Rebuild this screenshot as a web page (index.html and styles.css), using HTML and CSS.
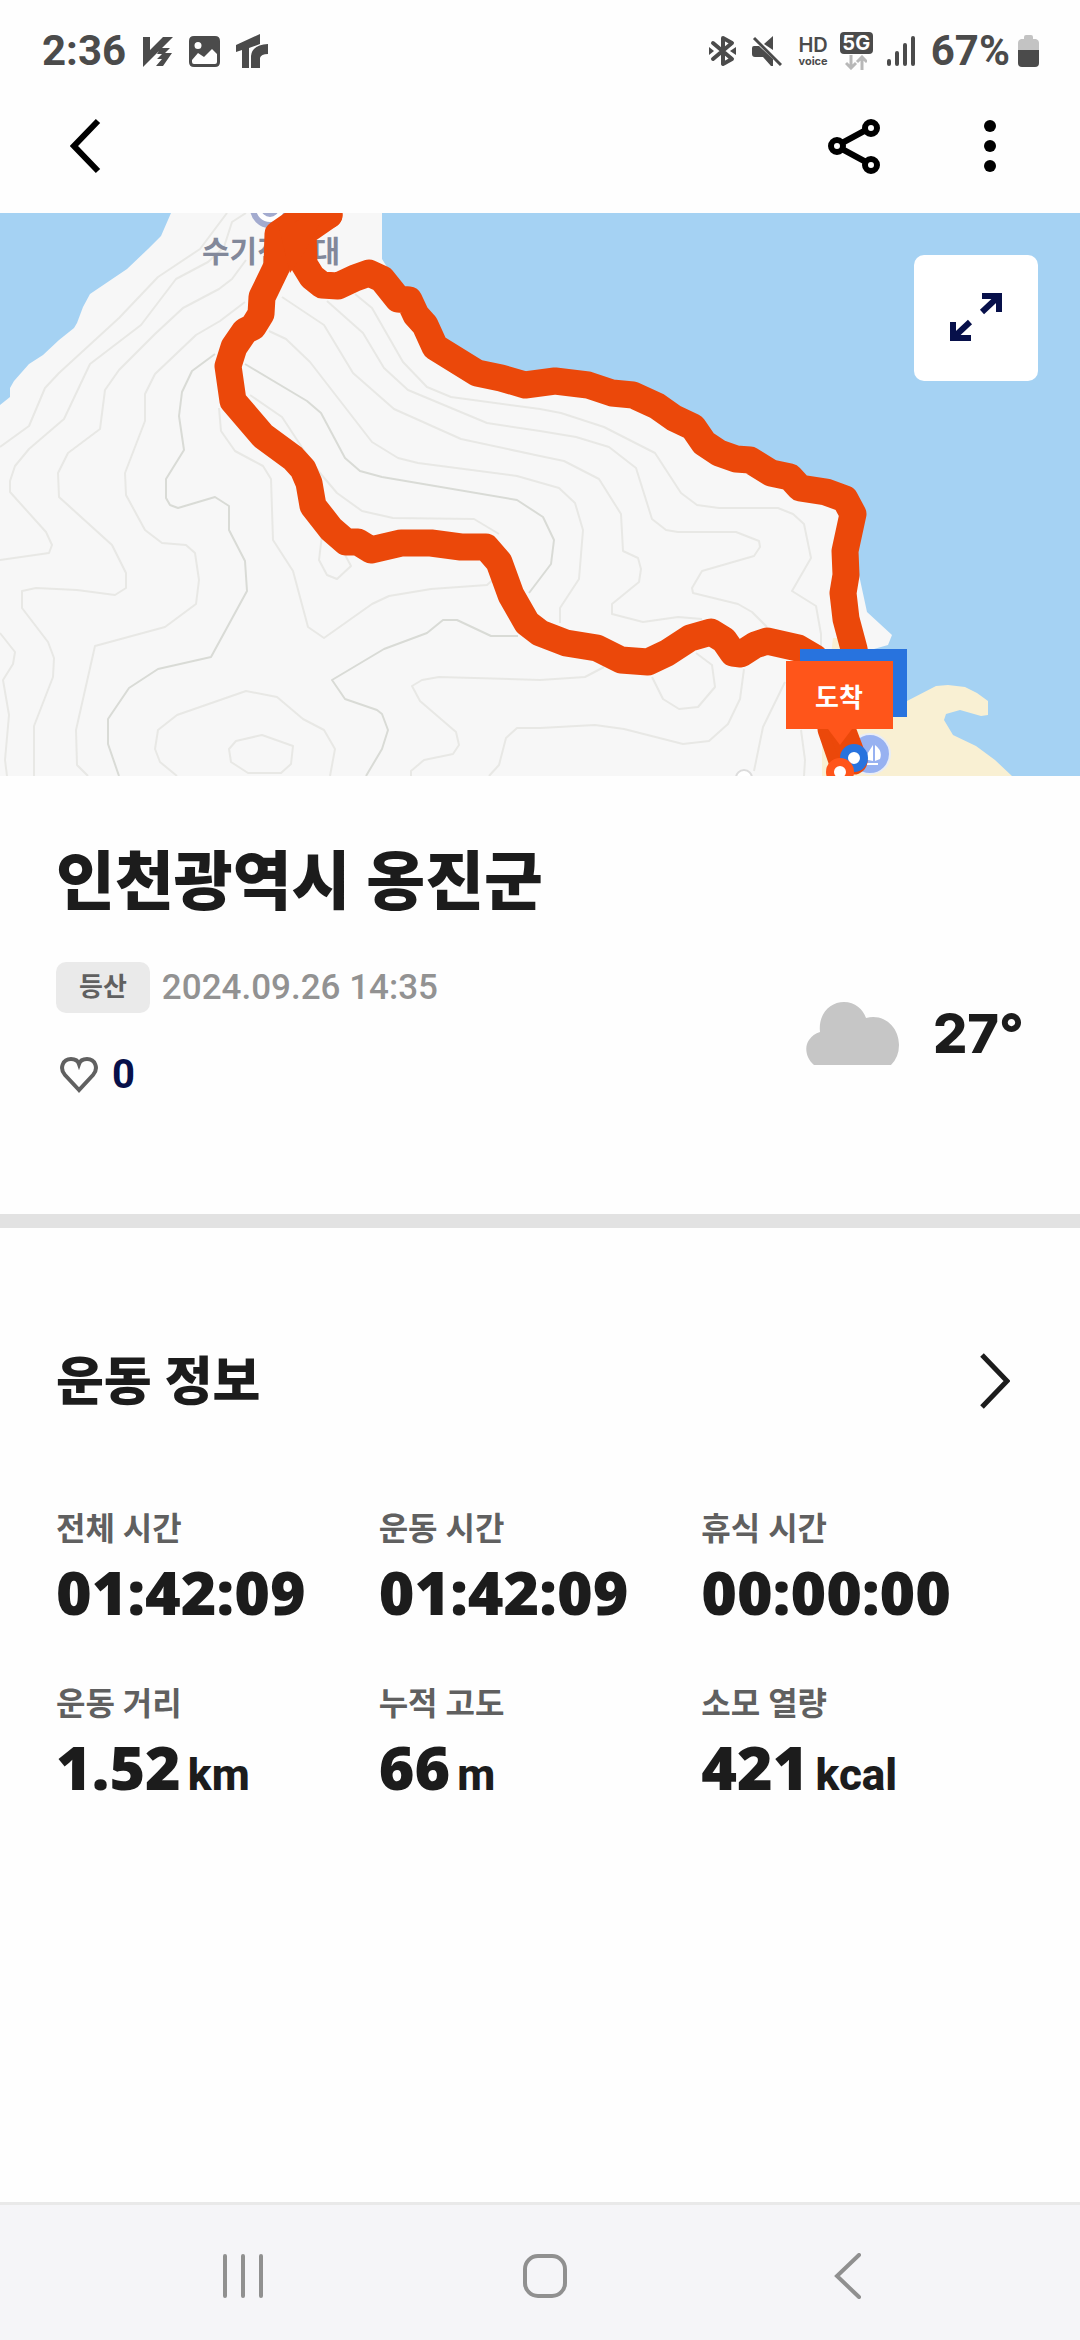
FILE: index.html
```html
<!DOCTYPE html>
<html lang="ko">
<head>
  <meta charset="UTF-8">
  <meta name="viewport" content="width=device-width, initial-scale=1.0">
  <title>인천광역시 옹진군</title>
  <link rel="stylesheet" href="styles.css">
</head>
<body>
  <div class="status-bar">
    <div class="status-left">
      <span class="status-text">2:36</span>
      <svg width="30" height="31" viewBox="0 0 30 31"><path d="M0 1H7V14L20 1H30L19 12H27L22 17H29L20 30H13L19 23H14L19 18H14L16 15L0 31Z"/></svg>
      <svg width="31" height="31" viewBox="0 0 31 31"><path fill-rule="evenodd" d="M5 0H26Q31 0 31 5V26Q31 31 26 31H5Q0 31 0 26V5Q0 0 5 0ZM9 6A3.500 3.500 0 1 0 9 13A3.500 3.500 0 1 0 9 6ZM3 24V26Q3 28 5 28H26Q28 28 28 26V18L23 13L15 21L9 17Z"/></svg>
      <svg width="32" height="34" viewBox="0 0 32 34"><path d="M0 11L24 0V10L13 14V34H6V16L0 18ZM15 34V22Q16 11 32 10V20Q25 20 24 24V34Z"/></svg>
    </div>
    <div class="status-right">
      <svg class="icon-bt" width="27" height="32" viewBox="0 0 27 32"><path fill="none" stroke="#4b4b4b" stroke-width="4" stroke-linejoin="round" stroke-linecap="round" d="M4 8L23 24L14 29V3L23 8L4 24"/><path d="M0 12L5 16L0 20ZM27 12L21 16L27 20Z"/></svg>
      <svg class="icon-mute" width="30" height="30" viewBox="0 0 30 30"><path d="M21 0V14L12 8ZM2 10H7L21 23V30H19L11 21H3Q0 21 0 18V12Q0 10 2 10Z"/><path fill="none" stroke="#4b4b4b" stroke-width="3" d="M2 2L29 29"/></svg>
      <div class="hd-voice"><b>HD</b><span>voice</span></div>
      <div class="network">
        <b>5G</b>
        <svg width="22" height="15" viewBox="0 0 22 15"><path fill="none" stroke="#b8b8b8" stroke-width="3" d="M6 0V13M1 8L6 13L11 8M17 15V2M12 7L17 2L22 7"/></svg>
      </div>
      <svg class="icon-signal" width="28" height="30" viewBox="0 0 28 30"><path fill="none" stroke="#4b4b4b" stroke-width="4" stroke-linecap="round" d="M2 25V28M10 17V28M18 9V28M26 2V28"/></svg>
      <span class="status-text">67%</span>
      <svg class="icon-battery" width="21" height="32" viewBox="0 0 21 32"><path fill="#c3c3c3" d="M6 2Q6 0 8 0H13Q15 0 15 2V4H18Q21 5 21 8V16H0V8Q0 5 3 4H6Z"/><path d="M0 15H21V28Q21 32 17 32H4Q0 32 0 28Z"/></svg>
    </div>
  </div>

  <header class="top-bar">
    <button class="icon-button back" aria-label="뒤로">
      <svg width="32" height="56" viewBox="0 0 32 56"><path fill="none" stroke="#000" stroke-width="6" d="M28 3L4 28L28 53"/></svg>
    </button>
    <div class="top-actions">
      <button class="icon-button" aria-label="공유">
        <svg width="52" height="56" viewBox="0 0 52 56"><g fill="none" stroke="#000" stroke-width="6"><path d="M14 25L38 12M14 31L38 44"/><circle cx="9" cy="28" r="6"/><circle cx="43" cy="10" r="6"/><circle cx="43" cy="47" r="6"/></g></svg>
      </button>
      <button class="icon-button" aria-label="더보기">
        <svg width="12" height="52" viewBox="0 0 12 52"><circle cx="6" cy="6" r="6"/><circle cx="6" cy="26" r="6"/><circle cx="6" cy="46" r="6"/></svg>
      </button>
    </div>
  </header>

  <main>
    <div class="map">
      <svg class="map-canvas" viewBox="0 0 1080 563">
        <rect width="1080" height="563" fill="#a5d2f3"/>
        <!-- land and beach -->
        <path fill="#f7f7f7" d="M171 0L161 23L148 36L127 56L90 81L83 94L77 110L74 115L59 127L43 142L29 151L14 168L10 175V184L0 192V563H860V440L888 432L892 422L867 399L859 362L850 290L800 270L700 225L610 180L525 170L435 130L382 46V0Z"/>
        <path fill="#f9f0d3" d="M833 425L846 425V480L907 488L936 473L948 472L965 474L977 480L988 488V502L981 503L960 497L946 501L944 507L953 522L976 533L995 547L1012 563H822V520Z"/>
        <!-- contours -->
        <g class="contour">
          <path d="M227 0L200 36L158 64L119 105L59 160L45 175L29 213L0 234"/>
          <path d="M246 0L232 9L224 34L208 49L176 66L141 112L90 151L64 206L29 236L15 253L10 268V279L46 319L52 332L49 340L0 347"/>
          <path d="M246 47L232 66L219 76L183 95L155 121L119 157L105 177L100 216L68 240L58 260L59 284L112 332L126 360V375L115 382L77 377L36 375L22 378V395L48 429L54 445L53 464L34 513V563"/>
          <path d="M245 89L220 108L196 122L155 161L145 181V208L125 260L126 282L145 317L162 330L186 332L195 340L199 367L196 391L165 414L95 433L76 517L77 552L88 563"/>
          <path d="M219 195L221 218L235 238L263 253L271 266L273 327L293 358L308 414L324 425L372 391L389 383L431 376L487 372L496 364"/>
          <path d="M177 563L160 549L155 536L158 517L177 502L246 478L277 484L303 506L324 517L335 536L330 563"/>
          <path d="M262 522L293 533L291 551L281 560H248L231 549L229 536L236 528Z"/>
          <path d="M0 420L15 439L13 451L3 467L9 502L5 547L7 563"/>
          <path d="M322 322L319 347L327 362L337 366L351 353L344 340"/>
          <path d="M282 84L324 112L353 160L394 196L461 226L540 243L564 248L599 266L621 301L623 338L638 345L641 356L639 369L612 391V401L643 409L678 404L702 406"/>
          <path d="M327 88L363 120L384 155L408 177L487 210L540 218L576 224L609 234L636 255L652 306L666 317L678 319H736L759 328L760 334L754 343L702 358L692 375L693 380L738 391L752 399L767 414"/>
          <path d="M355 81L372 95L403 149L427 174L451 184L540 196L561 200L604 214L655 240L681 280L697 292L719 295H778L793 301L804 311L811 345L792 378L816 393L821 421V445"/>
          <path d="M269 118L286 126L310 149L372 229L398 245L418 250L517 263L559 275L575 290L583 317L579 366L560 395V410"/>
          <path d="M250 182L282 204L303 236L320 260L337 280L362 298L393 305L474 306L499 321"/>
          <path d="M604 454L585 464L540 467L439 464L422 467L412 473L420 488L456 519L459 532L453 541L424 547L411 558V563"/>
          <path d="M489 563L499 552L506 525L517 515H540L595 512L624 516L683 531L709 528L728 511L740 486L744 456"/>
          <path d="M652 464L663 486L679 496L698 494L715 474L712 452L696 440"/>
          <path d="M785 469L763 514L754 558M801 517L805 547L804 563"/>
        </g>
        <g class="contour major">
          <path d="M215 141L192 158L182 179L179 203L184 237L166 266V285L170 292L178 295L215 284L229 293V317L245 348L247 378L211 444L158 456L129 475L108 506V531L119 563"/>
          <path d="M518 423H491L457 407H443L427 420L384 436L332 467L345 486L377 497L382 501L388 517L382 536L366 563"/>
          <path d="M245 151L307 188L321 200L345 245L360 258L382 264L517 287L543 304L554 327L551 351L529 380"/>
        </g>
        <circle cx="744" cy="565" r="8" fill="#fff" stroke="#dcdcdc" stroke-width="2"/>
        <!-- viewpoint -->
        <circle cx="270" cy="-5" r="17" fill="#fff" stroke="#a3abcf" stroke-width="6"/>
        <circle cx="270" cy="-5" r="9" fill="#a3abcf"/>
        <text class="place-name" x="271" y="49">수기전망대</text>
        <!-- marina -->
        <circle cx="870" cy="541" r="20" fill="#97b1f1" stroke="#e9edf5" stroke-width="2"/>
        <path fill="#fff" d="M873 532V548L864 546ZM875 532Q883 538 880 546L875 548ZM866 550H878V552H866Z"/>
        <!-- route -->
        <path class="route" d="M329 2L291 12L278 21L277 53L262 84L261 101L253 114L245 118L234 134L228 153L233 188L263 223L293 245L303 256L309 270L313 293L331 316L346 329L358 329L371 337L401 330H431L461 334H486L499 349L511 382L527 410L540 420L566 430L597 435L621 447L648 449L667 440L690 425L711 419L724 427L733 440L741 441L755 432L767 428L798 435L815 445L829 469L831 516L842 548"/>
        <path class="route" d="M329 2L303 20L304 51L312 64L322 72L338 73L355 65L369 60L382 66L398 86L409 87L416 102L425 112L435 134L477 160L501 165L525 172L555 168L588 172L612 180L633 182L657 193L674 205L693 214L704 230L719 240L736 246L750 247L771 260L790 264L800 275L826 279L845 286L853 301L845 338L846 362L843 380L846 406L854 436L858 458L842 516L854 548"/>
        <path fill="#eb480a" d="M278 10H320L304 40L290 60Z"/>
        <!-- start and finish markers -->
        <rect x="800" y="436" width="107" height="68" fill="#2873de"/>
        <circle cx="854" cy="545" r="10" fill="#fff" stroke="#2873de" stroke-width="8"/>
        <path fill="#ff551a" d="M786 448H893V516H852L840 532L828 516H786Z"/>
        <circle cx="840" cy="559" r="10" fill="#fff" stroke="#ff551a" stroke-width="8"/>
        <text class="marker-name" x="839" y="494">도착</text>
      </svg>
      <button class="expand" aria-label="지도 확대">
        <svg width="52" height="50" viewBox="0 0 52 50"><g fill="none" stroke="#07104a" stroke-width="6"><path d="M32 3H49V19M48 4L32 19"/><path d="M3 29V45H21M4 44L20 29"/></g></svg>
      </button>
    </div>

    <section class="summary">
      <h1>인천광역시 옹진군</h1>
      <div class="summary-row">
        <div>
          <div class="meta">
            <span class="badge">등산</span>
            <time datetime="2024-09-26T14:35">2024.09.26 14:35</time>
          </div>
          <button class="like" aria-label="좋아요">
            <svg width="38" height="36" viewBox="0 0 38 36"><path fill="none" stroke="#606060" stroke-width="4" d="M19 33L5 18C-1 11 3 2 11 2C15 2 18 4 19 7C20 4 23 2 27 2C35 2 39 11 33 18Z"/></svg>
            <span>0</span>
          </button>
        </div>
        <div class="weather">
          <svg width="93" height="64" viewBox="0 0 93 64"><path fill="#c6c6c6" d="M8 63C0 56 -2 45 3 38Q7 32 14 30C12 12 24 0 38 0C49 0 57 7 60 16C78 11 93 25 93 43Q93 55 85 63Z"/></svg>
          <span>27°</span>
        </div>
      </div>
    </section>

    <section class="workout">
      <div class="workout-head">
        <h2>운동 정보</h2>
        <button class="icon-button" aria-label="운동 정보 더보기">
          <svg width="30" height="56" viewBox="0 0 30 56"><path fill="none" stroke="#1c1c1c" stroke-width="5" d="M2 2L27 28L2 54"/></svg>
        </button>
      </div>
      <dl class="stats">
        <div><dt>전체 시간</dt><dd>01:42:09</dd></div>
        <div><dt>운동 시간</dt><dd>01:42:09</dd></div>
        <div><dt>휴식 시간</dt><dd>00:00:00</dd></div>
        <div><dt>운동 거리</dt><dd>1.52<small>km</small></dd></div>
        <div><dt>누적 고도</dt><dd>66<small>m</small></dd></div>
        <div><dt>소모 열량</dt><dd>421<small>kcal</small></dd></div>
      </dl>
    </section>
  </main>

  <nav class="nav-bar">
    <button class="icon-button" aria-label="최근 앱">
      <svg width="42" height="44" viewBox="0 0 42 44"><path d="M3 2V42M21 2V42M39 2V42"/></svg>
    </button>
    <button class="icon-button" aria-label="홈">
      <svg width="44" height="44" viewBox="0 0 44 44"><rect x="2" y="2" width="40" height="40" rx="13"/></svg>
    </button>
    <button class="icon-button" aria-label="뒤로 가기">
      <svg width="28" height="46" viewBox="0 0 28 46"><path d="M25 2L3 23L25 44"/></svg>
    </button>
  </nav>
</body>
</html>
```
FILE: styles.css
```css
* {
  box-sizing: border-box;
}
body {
  margin: 0;
  min-height: 100vh;
  display: flex;
  flex-direction: column;
  background: #fefefe;
  color: #1c1c1c;
  font-family: Roboto, "Noto Sans CJK KR", sans-serif;
}
svg {
  display: block;
  flex: none;
}
button {
  border: none;
  padding: 0;
  background: none;
  font: inherit;
  color: inherit;
  cursor: pointer;
}
h1, h2, dl, dd {
  margin: 0;
}
main {
  flex: 1;
}

/* status bar */
.status-bar {
  display: flex;
  justify-content: space-between;
  height: 78px;
  padding: 24px 41px 0 42px;
  color: #4b4b4b;
}
.status-bar svg {
  fill: #4b4b4b;
}
.status-left, .status-right {
  display: flex;
  align-items: center;
}
.status-left {
  gap: 16px;
}
.status-text {
  font-size: 42px;
  font-weight: 700;
  line-height: 54px;
}
.status-left .status-text {
  margin-right: 1px;
}
.icon-bt, .icon-mute {
  margin-right: 16px;
}
.hd-voice {
  display: flex;
  flex-direction: column;
  align-items: center;
  margin-right: 12px;
  font-family: Inter, sans-serif;
  font-size: 11px;
  font-weight: 700;
  line-height: 12px;
}
.hd-voice b {
  font-size: 20px;
  font-weight: 600;
  line-height: 20px;
}
.network {
  display: flex;
  flex-direction: column;
  align-items: center;
  gap: 1px;
  margin-right: 14px;
}
.network b {
  width: 33px;
  border-radius: 4px;
  background: #4b4b4b;
  color: #fff;
  font-family: Inter, sans-serif;
  font-size: 20px;
  line-height: 22px;
  text-align: center;
}
.icon-signal {
  margin-right: 16px;
}
.icon-battery {
  margin-left: 8px;
}

/* top bar */
.top-bar {
  display: flex;
  justify-content: space-between;
  align-items: center;
  height: 135px;
  padding: 0 84px 0 70px;
}
.top-actions {
  display: flex;
  align-items: center;
  gap: 104px;
}

/* map */
.map {
  position: relative;
}
.map-canvas {
  width: 100%;
  height: auto;
}
.contour {
  fill: none;
  stroke: #e8e8e5;
  stroke-width: 2;
  stroke-linejoin: round;
}
.contour.major {
  stroke: #d9dbd6;
}
.route {
  fill: none;
  stroke: #eb480a;
  stroke-width: 27;
  stroke-linejoin: round;
  stroke-linecap: round;
}
.place-name, .marker-name {
  font-family: "Noto Sans CJK KR", sans-serif;
  font-weight: 700;
  text-anchor: middle;
}
.place-name {
  font-size: 30px;
  fill: #82889a;
}
.marker-name {
  font-size: 26px;
  fill: #fff;
}
.expand {
  position: absolute;
  top: 42px;
  right: 42px;
  display: flex;
  justify-content: center;
  align-items: center;
  width: 124px;
  height: 126px;
  border-radius: 10px;
  background: #fff;
}

/* summary */
.summary {
  padding: 62px 56px 117px;
  border-bottom: 14px solid #e2e2e2;
}
h1 {
  font-size: 64px;
  font-weight: 900;
  line-height: 90px;
}
.summary-row {
  display: flex;
  justify-content: space-between;
  align-items: center;
  margin-top: 34px;
}
.meta {
  display: flex;
  align-items: center;
  gap: 12px;
}
.badge {
  padding: 0 23px;
  border-radius: 10px;
  background: #eaeaea;
  color: #606060;
  font-size: 26px;
  font-weight: 700;
  line-height: 51px;
}
time {
  color: #929292;
  font-size: 35px;
  font-weight: 500;
  line-height: 51px;
}
.like {
  display: flex;
  align-items: center;
  gap: 14px;
  margin: 40px 0 0 4px;
  color: #07104a;
  font-size: 40px;
  font-weight: 700;
  line-height: 44px;
}
.weather {
  display: flex;
  align-items: center;
  gap: 34px;
  padding-top: 8px;
  font-family: Inter, sans-serif;
  font-size: 54px;
  font-weight: 800;
  line-height: 64px;
}

/* workout */
.workout {
  padding: 111px 56px 60px;
}
.workout-head {
  display: flex;
  justify-content: space-between;
  align-items: center;
  padding-right: 14px;
}
h2 {
  padding-top: 4px;
  font-size: 52px;
  font-weight: 900;
  line-height: 80px;
}
.stats {
  display: grid;
  grid-template-columns: repeat(3, 1fr);
  row-gap: 53px;
  margin-top: 82px;
}
dt {
  color: #606060;
  font-size: 32px;
  font-weight: 700;
  line-height: 48px;
}
dd {
  display: flex;
  align-items: baseline;
  gap: 7px;
  margin-top: 4px;
  font-family: "Open Sans", sans-serif;
  font-size: 61px;
  font-weight: 800;
  line-height: 70px;
}
dd small {
  font-family: Roboto, sans-serif;
  font-size: 44px;
  font-weight: 800;
  line-height: 44px;
}

/* system navigation */
.nav-bar {
  display: grid;
  grid-template-columns: repeat(3, 1fr);
  align-items: center;
  height: 138px;
  padding: 6px 81px 0 92px;
  border-top: 3px solid #e9e9e9;
  background: #f5f5f8;
}
.nav-bar button {
  display: flex;
  justify-content: center;
}
.nav-bar svg {
  fill: none;
  stroke: #909090;
  stroke-width: 4;
  stroke-linecap: round;
}
```
